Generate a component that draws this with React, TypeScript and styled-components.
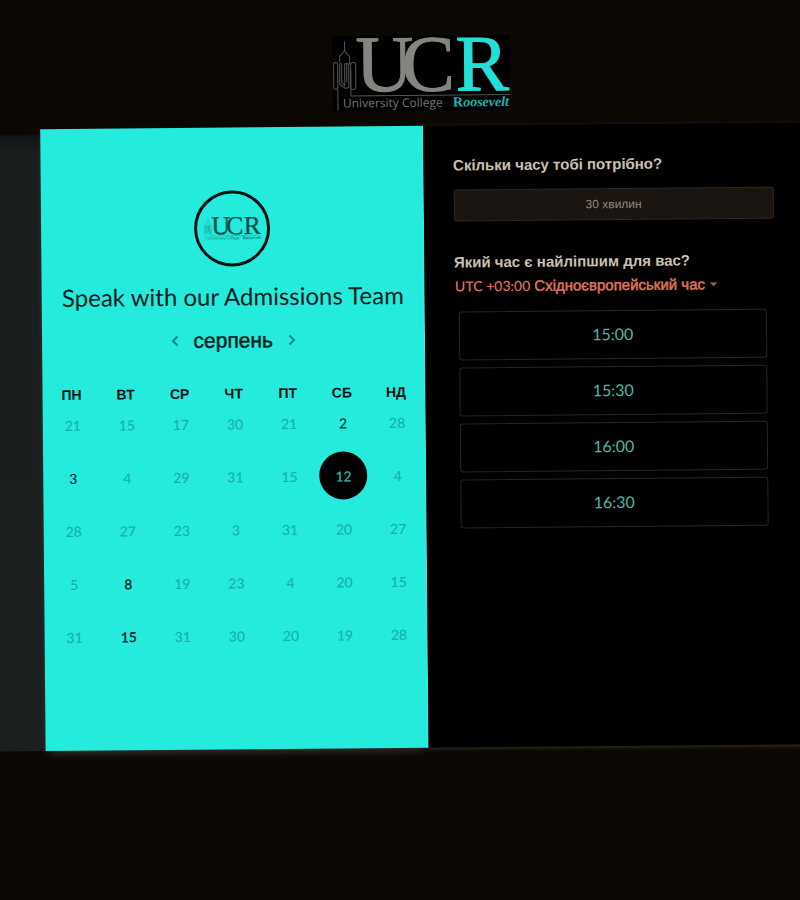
import React, { useState } from "react";
import styled, { createGlobalStyle } from "styled-components";

const humanist = `Lato, "Open Sans", sans-serif`;
const grotesque = `"Liberation Sans", Arial, sans-serif`;

const GlobalStyle = createGlobalStyle`
  *, *::before, *::after { box-sizing: border-box; }
  body { margin: 0; background: #0b0703; font-family: ${grotesque}; }
  button, select { font: inherit; margin: 0; cursor: pointer; }
`;

const Viewport = styled.div`
  min-height: 100vh;
  display: grid;
  overflow: hidden;
`;

const Page = styled.div`
  display: flex;
  flex-direction: column;
  min-width: 0;
  transform: rotate(-0.5deg);
`;

const Header = styled.header`
  display: flex;
  justify-content: center;
  padding: 36px 0 15px 49px;
`;

const BrandBox = styled.div`
  display: flex;
  width: 177px;
  height: 75px;
  background: #000;
`;

const Scheduler = styled.main`
  display: grid;
  grid-template-columns: 51px minmax(0, 1fr) minmax(0, 1fr);
  min-height: 622px;
  margin: 0 -8px;
`;

const SideStrip = styled.div`
  margin-top: 6px;
  background: linear-gradient(#121414, #1a1e1f 20px, #1b1f20);
`;

const CalendarPanel = styled.section`
  display: flex;
  flex-direction: column;
  align-items: center;
  padding-top: 63px;
  background: #24ebdc;
  box-shadow: 0 6px 10px -4px rgba(255, 250, 245, 0.2);
`;

const Avatar = styled.div`
  display: flex;
  align-items: center;
  justify-content: center;
  width: 76px;
  height: 76px;
  border: 3px solid #04110f;
  border-radius: 50%;
`;

const Title = styled.h1`
  margin: 14px 0 0;
  font: 400 24px/32px ${humanist};
  color: #06211e;
  white-space: nowrap;
`;

const MonthBar = styled.div`
  display: flex;
  align-items: center;
  justify-content: center;
  gap: 15px;
  height: 28px;
  margin-top: 14px;
`;

const MonthName = styled.h2`
  margin: 0;
  font: 400 21px/28px ${grotesque};
  color: #06211e;
  -webkit-text-stroke: 0.5px #06211e;
`;

const ArrowButton = styled.button`
  display: flex;
  padding: 4px 0;
  border: 0;
  background: none;
  color: #128a82;
`;

const Calendar = styled.table`
  width: calc(100% - 4px);
  margin-top: 33px;
  table-layout: fixed;
  border-collapse: collapse;
`;

const Weekday = styled.th`
  height: 12px;
  padding: 0;
  font: 700 14px/12px ${grotesque};
  color: #04110f;
`;

const DayCell = styled.td`
  height: 53px;
  padding: 0 0 0 2px;
  text-align: center;
  vertical-align: top;
`;

type DayState = "off" | "open" | "strong";
const dayColor = { off: "#17b0a8", open: "#08302d", strong: "#08302d" };

const DayButton = styled.button<{ $state: DayState; $selected: boolean }>`
  width: 48px;
  height: 48px;
  padding: 0;
  border: 0;
  border-radius: 50%;
  background: ${(p) => (p.$selected ? "#000" : "transparent")};
  color: ${(p) => (p.$selected ? "#3cb5b0" : dayColor[p.$state])};
  font-family: ${humanist};
  font-size: 14px;
  font-weight: ${(p) => (p.$state === "strong" ? 700 : 500)};
  &:disabled { cursor: default; }
`;

const TimePanel = styled.section`
  display: flex;
  flex-direction: column;
  padding: 30px 32px 30px 30px;
  background: #000;
  box-shadow: 0 1px 4px rgba(255, 235, 215, 0.2);
`;

const Question = styled.h3`
  margin: 0;
  font: 700 15px/20px ${grotesque};
  color: #cbc1b4;
`;

const DurationButton = styled.button`
  height: 32px;
  margin: 14px 0 31px;
  border: 1px solid #2f2820;
  border-radius: 3px;
  background: #1a1510;
  color: #94897b;
  font-size: 12px;
`;

const ZoneRow = styled.div`
  display: flex;
  align-items: center;
  gap: 4px;
  height: 20px;
  margin-top: 4px;
  padding-left: 1px;
  color: #e2745c;
`;

const ZoneOffset = styled.label`
  font: 500 14px/20px ${humanist};
  white-space: nowrap;
`;

const ZoneSelect = styled.select`
  appearance: none;
  padding: 0;
  border: 0;
  background: none;
  color: inherit;
  font: 400 15px/20px ${grotesque};
  -webkit-text-stroke: 0.5px #e2745c;
`;

const SlotList = styled.ul`
  display: flex;
  flex-direction: column;
  gap: 7px;
  margin: 15px 8px 0 4px;
  padding: 0;
  list-style: none;
`;

const SlotButton = styled.button`
  display: block;
  width: 100%;
  height: 49px;
  padding: 0 0 1px;
  border: 1px solid #2b251e;
  border-radius: 3px;
  background: transparent;
  color: #4fb9a4;
  font: 400 16px/20px ${humanist};
`;

const LogoSvg = styled.svg`
  display: block;
  overflow: visible;
`;

type LogoProps = { width: number; ink: string; accent: string; line: string; motto: string };

function UcrLogo({ width, ink, accent, line, motto }: LogoProps) {
  return (
    <LogoSvg width={width} viewBox="0 0 177 75" role="img" aria-label="University College Roosevelt">
      <g fill="none" stroke={line} strokeWidth="1">
        <path d="M12 5v9l-2 3-3 3v6M12 14l2 3 3 3v8" />
        <path d="M5 74V53M18 33v26.500H177" />
        <rect x="1" y="26" width="4" height="27" rx="2" />
        <rect x="18" y="26" width="5" height="27" rx="2" />
        <path d="M7 48V28q1-2 2 0v18l3 3V28q1-2 2 0v18M14 28q1-2 2 0v23l-3 1-6-4" />
      </g>
      <g fontFamily='"Liberation Serif", serif' fontSize="80" strokeWidth="1">
        <text x="23" y="55" fill={ink} stroke={ink}>U</text>
        <text x="69" y="55" fill={ink} stroke={ink}>C</text>
        <text x="123" y="55" fill={accent} stroke={accent}>R</text>
      </g>
      <text x="10" y="71" fill={motto} fontFamily='"Open Sans", sans-serif' fontSize="12">University College</text>
      <text x="120" y="71" fill={accent} opacity="0.8" fontFamily='"Liberation Serif", serif' fontSize="14">
        <tspan fontWeight="700">R</tspan>
        <tspan fontStyle="italic" fontWeight="700">oosevelt</tspan>
      </text>
    </LogoSvg>
  );
}

function Chevron({ next = false }: { next?: boolean }) {
  return (
    <svg width="8" height="12" viewBox="0 0 8 12" fill="none" stroke="currentColor" strokeWidth="2" aria-hidden="true">
      <path d={next ? "M1.500 1.500 6 6l-4.500 4.500" : "M6.500 1.500 2 6l4.500 4.500"} />
    </svg>
  );
}

const weekdays = ["ПН", "ВТ", "СР", "ЧТ", "ПТ", "СБ", "НД"];
const weeks = [
  [21, 15, 17, 30, 21, 2, 28],
  [3, 4, 29, 31, 15, 12, 4],
  [28, 27, 23, 3, 31, 20, 27],
  [5, 8, 19, 23, 4, 20, 15],
  [31, 15, 31, 30, 20, 19, 28],
];
const dayStates: Record<string, DayState> = {
  "0-5": "open",
  "1-0": "open",
  "1-5": "open",
  "3-1": "strong",
  "4-1": "strong",
};
const slots = ["15:00", "15:30", "16:00", "16:30"];

export default function App() {
  const [selected, setSelected] = useState("1-5");
  return (
    <>
      <GlobalStyle />
      <Viewport>
        <Page>
          <Header>
            <BrandBox>
              <UcrLogo width={177} ink="#858580" accent="#24dfd6" line="#555" motto="#777773" />
            </BrandBox>
          </Header>
          <Scheduler>
            <SideStrip />
            <CalendarPanel>
              <Avatar>
                <UcrLogo width={57} ink="#0b4f4b" accent="#0b4f4b" line="#128a82" motto="#0e6d67" />
              </Avatar>
              <Title>Speak with our Admissions Team</Title>
              <MonthBar>
                <ArrowButton aria-label="Попередній місяць"><Chevron /></ArrowButton>
                <MonthName>серпень</MonthName>
                <ArrowButton aria-label="Наступний місяць"><Chevron next /></ArrowButton>
              </MonthBar>
              <Calendar>
                <thead>
                  <tr>{weekdays.map((d) => <Weekday key={d} scope="col">{d}</Weekday>)}</tr>
                </thead>
                <tbody>
                  {weeks.map((week, w) => (
                    <tr key={w}>
                      {week.map((day, d) => {
                        const id = `${w}-${d}`;
                        const state = dayStates[id] ?? "off";
                        return (
                          <DayCell key={id}>
                            <DayButton
                              $state={state}
                              $selected={id === selected}
                              disabled={state === "off"}
                              aria-pressed={id === selected}
                              onClick={() => setSelected(id)}
                            >
                              {day}
                            </DayButton>
                          </DayCell>
                        );
                      })}
                    </tr>
                  ))}
                </tbody>
              </Calendar>
            </CalendarPanel>
            <TimePanel>
              <Question>Скільки часу тобі потрібно?</Question>
              <DurationButton>30 хвилин</DurationButton>
              <Question>Який час є найліпшим для вас?</Question>
              <ZoneRow>
                <ZoneOffset htmlFor="zone">UTC +03:00</ZoneOffset>
                <ZoneSelect id="zone">
                  <option>Східноєвропейський час</option>
                </ZoneSelect>
                <svg width="8" height="4" viewBox="0 0 8 4" aria-hidden="true">
                  <path d="M0 0h8L4 4z" fill="#8d6a5c" />
                </svg>
              </ZoneRow>
              <SlotList>
                {slots.map((s) => <li key={s}><SlotButton>{s}</SlotButton></li>)}
              </SlotList>
            </TimePanel>
          </Scheduler>
        </Page>
      </Viewport>
    </>
  );
}
